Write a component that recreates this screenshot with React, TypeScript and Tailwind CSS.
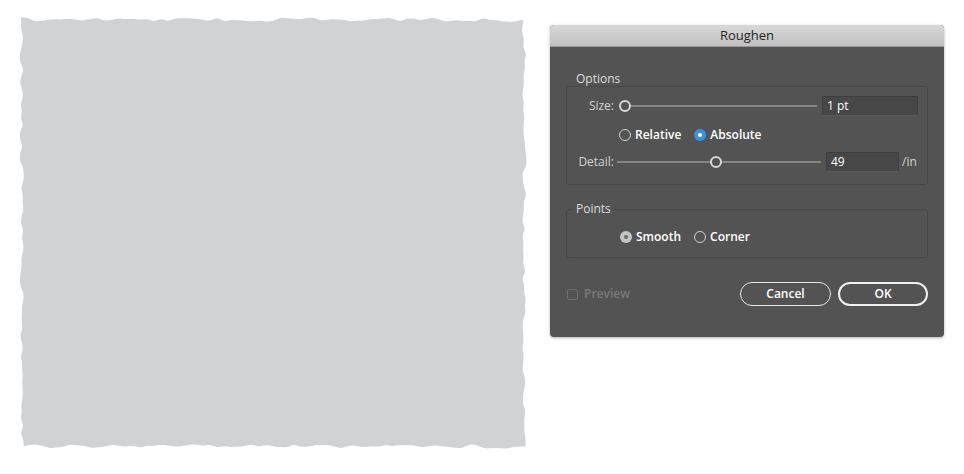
import React from "react";

// deterministic jitter for the roughened rectangle
function rng(seed: number) {
  let a = seed;
  return () => {
    a |= 0;
    a = (a + 0x6d2b79f5) | 0;
    let t = Math.imul(a ^ (a >>> 15), 1 | a);
    t = (t + Math.imul(t ^ (t >>> 7), 61 | t)) ^ t;
    return ((t ^ (t >>> 14)) >>> 0) / 4294967296;
  };
}

function roughPath(w: number, h: number, pad: number) {
  const r = rng(7);
  const pts: [number, number][] = [];
  const step = 7;
  const j = () => (r() - 0.35) * 4.5;
  for (let x = pad; x < w - pad; x += step) pts.push([x, pad + j()]);
  for (let y = pad; y < h - pad; y += step) pts.push([w - pad - j(), y]);
  for (let x = w - pad; x > pad; x -= step) pts.push([x, h - pad - j()]);
  for (let y = h - pad; y > pad; y -= step) pts.push([pad + j(), y]);
  let d = `M${pts[0][0].toFixed(1)},${pts[0][1].toFixed(1)}`;
  for (let i = 1; i < pts.length; i++) {
    const [x0, y0] = pts[i - 1];
    const [x1, y1] = pts[i];
    d += ` Q${x0.toFixed(1)},${y0.toFixed(1)} ${((x0 + x1) / 2).toFixed(1)},${((y0 + y1) / 2).toFixed(1)}`;
  }
  return d + " Z";
}

const shapePath = roughPath(510, 434, 3);

function Knob() {
  return (
    <div className="w-[12px] h-[12px] rounded-full border-2 border-[#d6d6d6] bg-[#535353] shrink-0" />
  );
}

function Slider({ width, pos }: { width: number; pos: number }) {
  return (
    <div className="relative h-[12px] flex items-center" style={{ width }}>
      <div className="h-[2px] w-full bg-[#858585]" />
      <div className="absolute top-0" style={{ left: pos - 6 }}>
        <Knob />
      </div>
    </div>
  );
}

function Radio({ state }: { state: "off" | "blue" | "gray" }) {
  if (state === "blue")
    return (
      <div className="w-[12px] h-[12px] rounded-full bg-[#3d8fe6] flex items-center justify-center shrink-0">
        <div className="w-[4px] h-[4px] rounded-full bg-white" />
      </div>
    );
  if (state === "gray")
    return (
      <div className="w-[12px] h-[12px] rounded-full bg-[#c4c4c4] flex items-center justify-center shrink-0">
        <div className="w-[4px] h-[4px] rounded-full bg-[#6a6a6a]" />
      </div>
    );
  return <div className="w-[12px] h-[12px] rounded-full border border-[#d0d0d0] shrink-0" />;
}

function Field({ value, width }: { value: string; width: number }) {
  return (
    <div
      className="h-[20px] bg-[#474747] border border-[#3e3e3e] border-b-[#5c5c5c] rounded-[2px] pl-[4px] flex items-center text-[12px] text-white"
      style={{ width }}
    >
      {value}
    </div>
  );
}

export default function App() {
  return (
    <div
      className="w-[964px] h-[474px] bg-white flex items-start pl-[18px] pt-[16px] gap-[22px]"
      style={{ fontFamily: '"Open Sans", "Noto Sans", sans-serif' }}
    >
      <svg width={510} height={434} viewBox="0 0 510 434" className="shrink-0">
        <path d={shapePath} fill="#d1d2d4" />
      </svg>

      <div className="mt-[9px] w-[394px] h-[312px] rounded-[4px] overflow-hidden bg-[#535353] shadow-[0_1px_3px_rgba(0,0,0,0.3)] flex flex-col">
        <div className="h-[22px] bg-gradient-to-b from-[#d8d8d8] to-[#c0c0c0] border-b border-[#9a9a9a] flex items-center justify-center text-[13px] text-[#262626]">
          Roughen
        </div>

        <div className="px-[16px] pt-[23px] flex flex-col">
          <div className="h-[16px] leading-[16px] pl-[10px] pt-[1px] text-[12px] text-[#dcdcdc]">Options</div>
          <div className="border border-[#474747] rounded-[3px] h-[99px] pl-[9px] pr-[9px] pt-[9px] flex flex-col">
            <div className="h-[20px] flex items-center">
              <div className="w-[38px] text-right text-[12px] text-[#d2d2d2]">Size:</div>
              <div className="ml-[5px]">
                <Slider width={198} pos={6} />
              </div>
              <div className="ml-[5px]">
                <Field value="1 pt" width={96} />
              </div>
            </div>
            <div className="h-[20px] mt-[9px] flex items-center pl-[43px] text-[12px] text-white font-semibold">
              <Radio state="off" />
              <span className="ml-[4px]">Relative</span>
              <span className="ml-[13px]" />
              <Radio state="blue" />
              <span className="ml-[4px]">Absolute</span>
            </div>
            <div className="h-[20px] mt-[7px] flex items-center">
              <div className="w-[38px] text-right text-[12px] text-[#d2d2d2]">Detail:</div>
              <div className="ml-[3px]">
                <Slider width={204} pos={99} />
              </div>
              <div className="ml-[5px]">
                <Field value="49" width={73} />
              </div>
              <div className="ml-[3px] text-[12px] text-[#d2d2d2]">/in</div>
            </div>
          </div>

          <div className="mt-[24px] relative border border-[#474747] rounded-[3px] h-[49px] flex items-center pl-[53px] text-[12px] text-white font-semibold">
            <div className="absolute left-[6px] top-[-9px] px-[3px] bg-[#535353] font-normal text-[#dcdcdc] leading-[16px]">
              Points
            </div>
            <div className="mt-[6px] flex items-center">
              <Radio state="gray" />
              <span className="ml-[4px]">Smooth</span>
              <span className="ml-[13px]" />
              <Radio state="off" />
              <span className="ml-[4px]">Corner</span>
            </div>
          </div>

          <div className="mt-[24px] h-[24px] flex items-center">
            <div className="w-[11px] h-[11px] border border-[#6e6e6e] rounded-[2px] ml-[1px]" />
            <span className="ml-[6px] text-[12px] text-[#7a7a7a] font-semibold">Preview</span>
            <div className="flex-1" />
            <button className="w-[91px] h-[24px] rounded-full border border-[#e8e8e8] text-[12px] text-white font-semibold">
              Cancel
            </button>
            <button className="ml-[7px] w-[90px] h-[24px] rounded-full border-2 border-[#f0f0f0] text-[12px] text-white font-semibold">
              OK
            </button>
          </div>
        </div>
      </div>
    </div>
  );
}
